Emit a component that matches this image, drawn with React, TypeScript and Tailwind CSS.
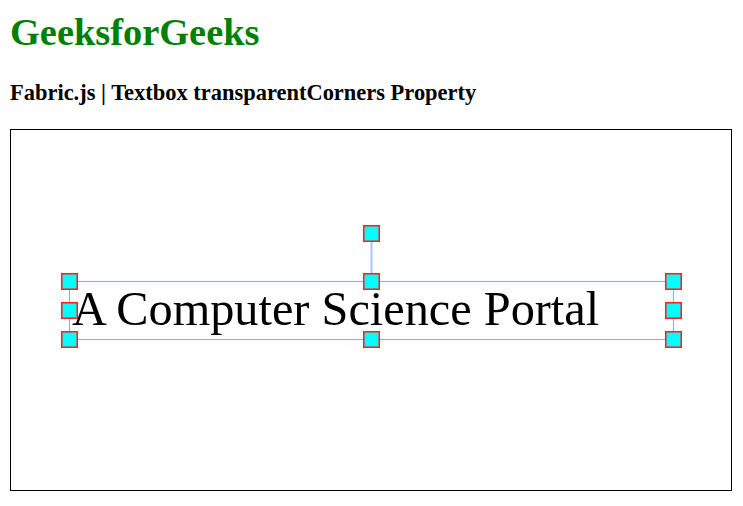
import React from "react";

const serif = { fontFamily: '"Liberation Serif", "Times New Roman", serif' };

function Handle({ cx, cy }: { cx: number; cy: number }) {
  return (
    <rect
      x={cx - 7.75}
      y={cy - 7.75}
      width={15.5}
      height={15.5}
      fill="#00ffff"
      stroke="#ff2020"
      strokeWidth={1.6}
    />
  );
}

export default function App() {
  const xs = [58.5, 360.5, 662.5];
  const ys = [151.5, 180.5, 209.5];
  return (
    <div className="bg-white w-[743px] h-[506px] pl-[10px] pt-[10px] text-black" style={serif}>
      <h1 className="text-[38.4px] leading-[44px] font-bold text-[#008000] m-0">GeeksforGeeks</h1>
      <h3 className="text-[22.46px] leading-[26px] font-bold mt-[26.4px] m-0">
        Fabric.js | Textbox transparentCorners Property
      </h3>
      <div className="mt-[22.6px] w-[722px] h-[362px] border border-black">
        <div className="relative w-[720px] h-[360px]">
          <div className="absolute left-[61px] top-[151px] text-[48.3px] leading-[56px] whitespace-nowrap">
            A Computer Science Portal
          </div>
          <svg className="absolute left-0 top-0" width={720} height={360}>
            <rect
              x={58.5}
              y={151.5}
              width={604}
              height={58}
              fill="none"
              stroke="#8cb0ff"
              strokeWidth={1.2}
            />
            <line x1={360.5} y1={103} x2={360.5} y2={151.5} stroke="#a8c2ff" strokeWidth={2} />
            {ys.map((y) =>
              xs.map((x) =>
                x === 360.5 && y === 180.5 ? null : <Handle key={`${x}-${y}`} cx={x} cy={y} />
              )
            )}
            <Handle cx={360.5} cy={103.5} />
          </svg>
        </div>
      </div>
    </div>
  );
}
